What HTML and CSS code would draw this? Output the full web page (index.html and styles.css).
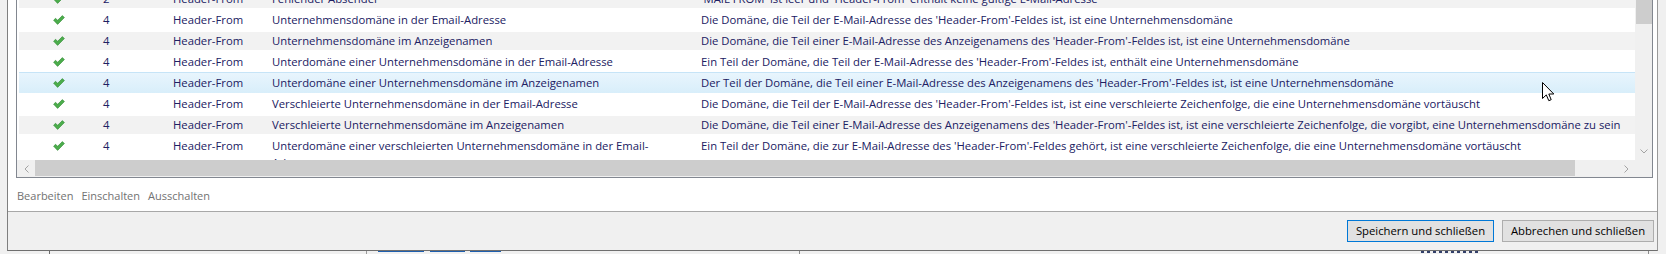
FILE: index.html
```html
<!DOCTYPE html>
<html lang="de">
<head>
<meta charset="utf-8">
<title>Regeln</title>
<link rel="stylesheet" href="styles.css">
</head>
<body>
<div class="screen">
  <div class="top">
    <div class="gutter-l"></div>
    <div class="dialog">
      <div class="content">
        <div class="list">
          <div class="list-main">
            <div class="viewport">
              <div class="rows">
                <div class="row alt">
                  <div class="c-check"><svg class="check" width="12" height="10" viewBox="0 0 12 10"><path d="M0.6 5.2 L2.6 3.3 L4.6 5.3 L9.4 0.6 L11.4 2.6 L4.6 9.4 Z"/></svg></div>
                  <div class="c-num">2</div>
                  <div class="c-head">Header-From</div>
                  <div class="c-rule">Fehlender Absender</div>
                  <div class="c-desc">'MAIL FROM' ist leer und 'Header-From' enthält keine gültige E-Mail-Adresse</div>
                </div>
                <div class="row">
                  <div class="c-check"><svg class="check" width="12" height="10" viewBox="0 0 12 10"><path d="M0.6 5.2 L2.6 3.3 L4.6 5.3 L9.4 0.6 L11.4 2.6 L4.6 9.4 Z"/></svg></div>
                  <div class="c-num">4</div>
                  <div class="c-head">Header-From</div>
                  <div class="c-rule">Unternehmensdomäne in der Email-Adresse</div>
                  <div class="c-desc">Die Domäne, die Teil der E-Mail-Adresse des 'Header-From'-Feldes ist, ist eine Unternehmensdomäne</div>
                </div>
                <div class="row alt">
                  <div class="c-check"><svg class="check" width="12" height="10" viewBox="0 0 12 10"><path d="M0.6 5.2 L2.6 3.3 L4.6 5.3 L9.4 0.6 L11.4 2.6 L4.6 9.4 Z"/></svg></div>
                  <div class="c-num">4</div>
                  <div class="c-head">Header-From</div>
                  <div class="c-rule">Unternehmensdomäne im Anzeigenamen</div>
                  <div class="c-desc">Die Domäne, die Teil einer E-Mail-Adresse des Anzeigenamens des 'Header-From'-Feldes ist, ist eine Unternehmensdomäne</div>
                </div>
                <div class="row">
                  <div class="c-check"><svg class="check" width="12" height="10" viewBox="0 0 12 10"><path d="M0.6 5.2 L2.6 3.3 L4.6 5.3 L9.4 0.6 L11.4 2.6 L4.6 9.4 Z"/></svg></div>
                  <div class="c-num">4</div>
                  <div class="c-head">Header-From</div>
                  <div class="c-rule">Unterdomäne einer Unternehmensdomäne in der Email-Adresse</div>
                  <div class="c-desc">Ein Teil der Domäne, die Teil der E-Mail-Adresse des 'Header-From'-Feldes ist, enthält eine Unternehmensdomäne</div>
                </div>
                <div class="row selected">
                  <div class="c-check"><svg class="check" width="12" height="10" viewBox="0 0 12 10"><path d="M0.6 5.2 L2.6 3.3 L4.6 5.3 L9.4 0.6 L11.4 2.6 L4.6 9.4 Z"/></svg></div>
                  <div class="c-num">4</div>
                  <div class="c-head">Header-From</div>
                  <div class="c-rule">Unterdomäne einer Unternehmensdomäne im Anzeigenamen</div>
                  <div class="c-desc">Der Teil der Domäne, die Teil einer E-Mail-Adresse des Anzeigenamens des 'Header-From'-Feldes ist, ist eine Unternehmensdomäne</div>
                </div>
                <div class="row">
                  <div class="c-check"><svg class="check" width="12" height="10" viewBox="0 0 12 10"><path d="M0.6 5.2 L2.6 3.3 L4.6 5.3 L9.4 0.6 L11.4 2.6 L4.6 9.4 Z"/></svg></div>
                  <div class="c-num">4</div>
                  <div class="c-head">Header-From</div>
                  <div class="c-rule">Verschleierte Unternehmensdomäne in der Email-Adresse</div>
                  <div class="c-desc">Die Domäne, die Teil der E-Mail-Adresse des 'Header-From'-Feldes ist, ist eine verschleierte Zeichenfolge, die eine Unternehmensdomäne vortäuscht</div>
                </div>
                <div class="row alt">
                  <div class="c-check"><svg class="check" width="12" height="10" viewBox="0 0 12 10"><path d="M0.6 5.2 L2.6 3.3 L4.6 5.3 L9.4 0.6 L11.4 2.6 L4.6 9.4 Z"/></svg></div>
                  <div class="c-num">4</div>
                  <div class="c-head">Header-From</div>
                  <div class="c-rule">Verschleierte Unternehmensdomäne im Anzeigenamen</div>
                  <div class="c-desc">Die Domäne, die Teil einer E-Mail-Adresse des Anzeigenamens des 'Header-From'-Feldes ist, ist eine verschleierte Zeichenfolge, die vorgibt, eine Unternehmensdomäne zu sein</div>
                </div>
                <div class="row">
                  <div class="c-check"><svg class="check" width="12" height="10" viewBox="0 0 12 10"><path d="M0.6 5.2 L2.6 3.3 L4.6 5.3 L9.4 0.6 L11.4 2.6 L4.6 9.4 Z"/></svg></div>
                  <div class="c-num">4</div>
                  <div class="c-head">Header-From</div>
                  <div class="c-rule">Unterdomäne einer verschleierten Unternehmensdomäne in der Email-Adresse</div>
                  <div class="c-desc">Ein Teil der Domäne, die zur E-Mail-Adresse des 'Header-From'-Feldes gehört, ist eine verschleierte Zeichenfolge, die eine Unternehmensdomäne vortäuscht</div>
                </div>
              </div>
            </div>
            <div class="vscroll">
              <div class="vthumb"></div>
              <div class="vtrack"></div>
              <div class="vbtn"><svg width="8" height="5" viewBox="0 0 8 5"><polyline points="0.5,0.5 4,4 7.5,0.5"/></svg></div>
            </div>
          </div>
          <div class="hscroll-row">
            <div class="hscroll">
              <div class="hbtn"><svg width="5" height="8" viewBox="0 0 5 8"><polyline points="4.5,0.5 1,4 4.5,7.5"/></svg></div>
              <div class="hthumb"></div>
              <div class="htrack"></div>
              <div class="hbtn"><svg width="5" height="8" viewBox="0 0 5 8"><polyline points="0.5,0.5 4,4 0.5,7.5"/></svg></div>
            </div>
            <div class="corner"></div>
          </div>
        </div>
        <div class="links">
          <span class="link">Bearbeiten</span>
          <span class="link">Einschalten</span>
          <span class="link">Ausschalten</span>
        </div>
      </div>
      <div class="footer">
        <button class="btn default">Speichern und schließen</button>
        <button class="btn">Abbrechen und schließen</button>
      </div>
    </div>
    <div class="gutter-r"></div>
  </div>
  <div class="under">
    <span class="u-line u1"></span>
    <span class="u-line u2"></span>
    <span class="u-blue b1"></span>
    <span class="u-blue b2"></span>
    <span class="u-blue b3"></span>
    <span class="u-line u3"></span>
    <span class="u-text"></span>
    <span class="u-line u4"></span>
  </div>
  <svg class="cursor" width="13" height="20" viewBox="0 0 13 20"><path d="M0.5 0.5 L0.5 16.5 L4.3 12.9 L6.8 18.7 L9.2 17.7 L6.8 12 L11.8 12 Z"/></svg>
</div>
</body>
</html>
```

FILE: styles.css
```css
* { box-sizing: border-box; }

html, body {
  margin: 0;
  padding: 0;
}

body {
  width: 1666px;
  height: 254px;
  overflow: hidden;
  background: #f0f0f0;
  font-family: "Open Sans", "Noto Sans", sans-serif;
  font-size: 11px;
}

.screen {
  position: relative;
  width: 1666px;
  height: 254px;
}

.top {
  display: flex;
  height: 251px;
}

.gutter-l {
  width: 7px;
  flex: none;
}

.gutter-r {
  flex: 1;
}

.dialog {
  width: 1651px;
  flex: none;
  display: flex;
  flex-direction: column;
  border-left: 1px solid #7f7f7f;
  border-right: 1px solid #9a9a9a;
  border-bottom: 1px solid #6f6f6f;
  background: #fff;
}

.content {
  height: 211px;
  background: #fff;
  padding: 0 4px 0 8px;
  display: flex;
  flex-direction: column;
}

.list {
  height: 178px;
  border: 1px solid #828790;
  border-top: none;
  display: flex;
  flex-direction: column;
}

.list-main {
  height: 160px;
  display: flex;
}

.viewport {
  width: 1618px;
  height: 160px;
  overflow: hidden;
  padding-left: 2px;
}

.rows {
  margin-top: -12px;
  color: #202062;
  font-size: 11.3px;
}

.row {
  display: grid;
  grid-template-columns: 84px 70px 99px 429px 1fr;
  min-height: 21px;
  padding-top: 2px;
  line-height: 17px;
  white-space: nowrap;
}

.row.alt {
  background: linear-gradient(#fff 0 2px, #f2f2f2 2px calc(100% - 1px), #fff calc(100% - 1px));
}

.row.selected {
  background: linear-gradient(#e9f5fd, #d8eefa);
  box-shadow: inset 0 1px 0 #c6e4f7;
}

.c-check {
  padding-left: 34px;
}

.check {
  display: block;
  margin-top: 4px;
}

.check path {
  fill: #4cad4c;
  stroke: #2f8a33;
  stroke-width: 0.6;
  stroke-linejoin: round;
}

.c-rule {
  white-space: normal;
  padding-right: 20px;
}

.c-desc {
  overflow: hidden;
}

.vscroll {
  width: 17px;
  height: 160px;
  background: #f0f0f0;
  display: flex;
  flex-direction: column;
}

.vthumb {
  height: 24px;
  margin: 0 0 0 1px;
  background: #cdcdcd;
}

.vtrack {
  flex: 1;
}

.vbtn {
  height: 17px;
  display: flex;
  align-items: center;
  justify-content: center;
}

.vbtn svg polyline,
.hbtn svg polyline {
  fill: none;
  stroke: #a3a3a3;
  stroke-width: 1;
}

.hscroll-row {
  height: 17px;
  display: flex;
}

.hscroll {
  width: 1618px;
  display: flex;
  background: #f0f0f0;
}

.hbtn {
  width: 18px;
  flex: none;
  display: flex;
  align-items: center;
  justify-content: center;
}

.hthumb {
  width: 1540px;
  margin: 0 0 1px 0;
  background: #cdcdcd;
}

.htrack {
  flex: 1;
}

.corner {
  width: 17px;
  background: #f0f0f0;
}

.links {
  flex: 1;
  display: flex;
  gap: 8px;
  padding: 10px 0 0 1px;
  line-height: 16px;
  color: #727272;
}

.footer {
  flex: 1;
  background: #f0f0f0;
  border-top: 1px solid #a8a8a8;
  display: flex;
  justify-content: flex-end;
  align-items: flex-start;
  gap: 8px;
  padding: 8px 3px 0 0;
}

.btn {
  height: 22px;
  padding: 0;
  margin: 0;
  font-family: "Open Sans", "Noto Sans", sans-serif;
  font-size: 11.3px;
  color: #000;
  background: #e1e1e1;
  border: 1px solid #adadad;
  line-height: 18px;
  width: 152px;
}

.btn.default {
  width: 147px;
  border-color: #0078d7;
}

.under {
  height: 3px;
  display: flex;
  align-items: flex-start;
}

.u-line {
  width: 1px;
  height: 3px;
  background: #6a6a6a;
  flex: none;
}

.u1 { margin-left: 49px; }
.u2 { margin-left: 316px; background: #9a9a9a; }

.u-blue {
  height: 1px;
  background: #1f5fae;
  flex: none;
}

.b1 { width: 46px; margin-left: 11px; }
.b2 { width: 35px; margin-left: 6px; }
.b3 { width: 31px; margin-left: 5px; }

.u3 { margin-left: 298px; background: #8a8a8a; }

.u-text {
  width: 60px;
  height: 2px;
  margin-left: 621px;
  background: repeating-linear-gradient(90deg, #33406a 0 3px, transparent 3px 6px);
}

.u4 { margin-left: 167px; background: #8a8a8a; }

.cursor {
  position: absolute;
  left: 1542px;
  top: 82px;
}

.cursor path {
  fill: #fff;
  stroke: #000;
  stroke-width: 1;
  stroke-linejoin: miter;
}
```
